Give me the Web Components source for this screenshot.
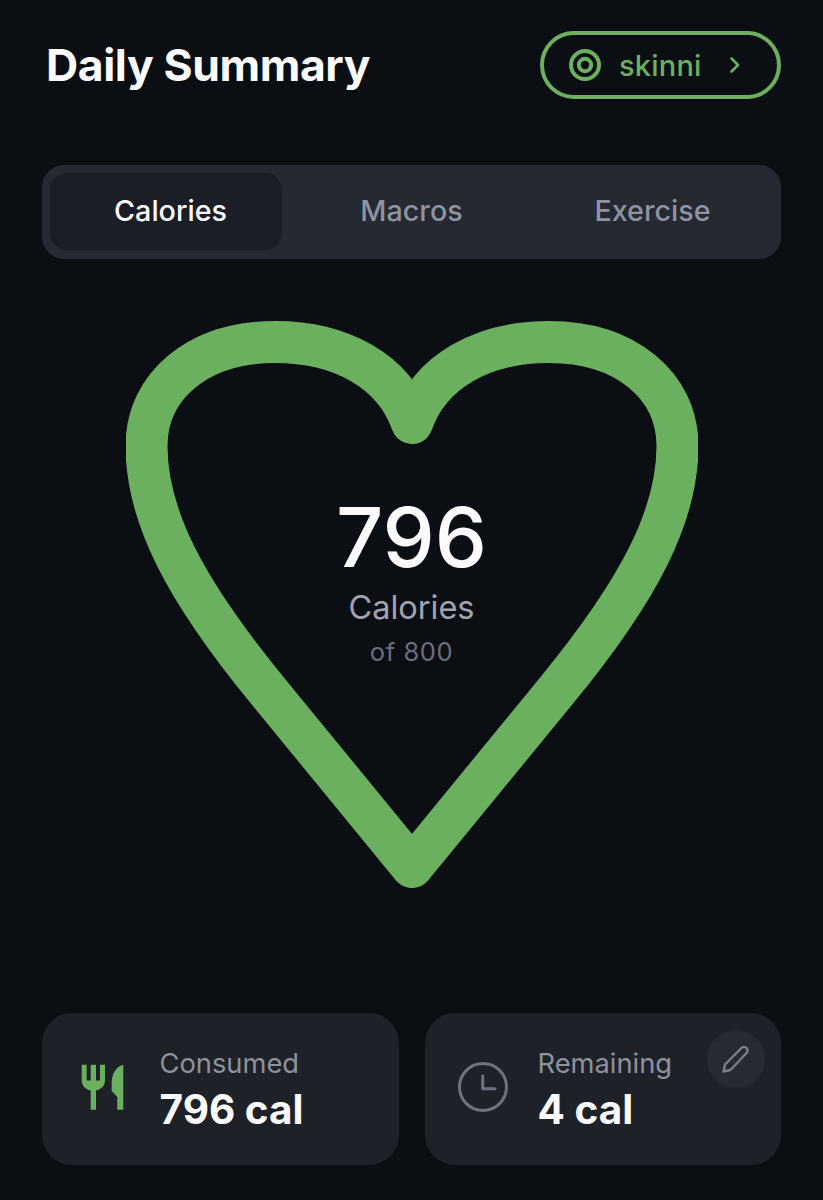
<!DOCTYPE html>
<html lang="en"><head><meta charset="utf-8"><title>Daily Summary</title>
<style>
html,body{margin:0;background:#0b0e13;}
body{width:823px;height:1200px;overflow:hidden;font-family:Inter,"Liberation Sans",sans-serif;color:#fff;}
daily-page{display:block}
</style></head><body>
<daily-page>
  <page-header slot="header"><span slot="title">Daily Summary</span><user-pill>skinni</user-pill></page-header>
  <seg-tabs></seg-tabs>
  <heart-gauge value="796" label="Calories" sub="of 800"></heart-gauge>
  <stat-card slot="card" kind="food" label="Consumed" value="796 cal"></stat-card>
  <stat-card slot="card" kind="clock" label="Remaining" value="4 cal" editable></stat-card>
</daily-page>
<script>
function def(name, css, html){
  customElements.define(name, class extends HTMLElement{
    constructor(){super();this.attachShadow({mode:'open'});}
    connectedCallback(){this.shadowRoot.innerHTML='<style>'+css+'</style>'+(typeof html==='function'?html(this):html);}
  });
}
def('daily-page',`
:host{display:block;box-sizing:border-box;width:823px;height:1200px;padding:31px 42px 0}
.cards{display:grid;grid-template-columns:357px 356px;column-gap:26px;margin-top:125px}
`,`<slot name="header"></slot><slot></slot><div class="cards"><slot name="card"></slot></div>`);

def('page-header',`
:host{display:flex;justify-content:space-between;align-items:center;height:68px;padding-left:4px}
.t{font:700 44.500px/1 Inter,"Liberation Sans",sans-serif;letter-spacing:-.4px;color:#fbfbfd;margin-top:1px}
`,`<div class="t"><slot name="title"></slot></div><slot></slot>`);

def('user-pill',`
:host{display:flex;align-items:center;box-sizing:border-box;width:241px;height:68px;border:4px solid #6cb05f;border-radius:34px;padding-left:25px;color:#6cb05f;font:500 29px/1 Inter,"Liberation Sans",sans-serif}
svg{display:block;flex:none}
.n{margin-left:18px;width:84px;letter-spacing:.2px}
.c{margin-left:26px}
`,`<svg width="32" height="32" viewBox="0 0 32 32" fill="none" stroke="#6cb05f" stroke-width="4"><circle cx="16" cy="16" r="14"/><circle cx="16" cy="16" r="6.200"/></svg>
<span class="n"><slot></slot></span>
<svg class="c" width="12" height="18" viewBox="0 0 12 18" fill="none" stroke="#6cb05f" stroke-width="2.600" stroke-linecap="round" stroke-linejoin="round"><path d="M2.500 2.500 9 9l-6.500 6.500"/></svg>`);

def('seg-tabs',`
:host{display:grid;grid-template-columns:repeat(3,1fr);position:relative;box-sizing:border-box;height:94px;margin-top:66px;padding:8px 8px 9px;background:#252932;border-radius:22px;font:500 28.700px/1 Inter,"Liberation Sans",sans-serif}
.ind{position:absolute;left:8px;top:8px;width:232px;height:77px;border-radius:17px;background:#1b1e26}
.tab{position:relative;display:flex;align-items:center;justify-content:center;color:#8f93a1}
.on{color:#fbfbfd}
`,`<div class="ind"></div><div class="tab on">Calories</div><div class="tab">Macros</div><div class="tab">Exercise</div>`);

def('heart-gauge',`
:host{display:grid;justify-items:center;margin-top:62px;height:567px}
svg,.txt{grid-area:1/1}
svg{display:block}
.txt{display:flex;flex-direction:column;align-items:center;padding-top:168px}
.v{font:550 83px/96px Inter,"Liberation Sans",sans-serif;color:#fbfbfd}
.l{font:400 32.500px/38px Inter,"Liberation Sans",sans-serif;color:#a0a3b1;margin-top:4px}
.s{font:400 25.500px/30px Inter,"Liberation Sans",sans-serif;color:#6b6e7c;margin-top:10px;letter-spacing:.6px}
`,h=>`<svg width="572" height="567" viewBox="0 0 572 567" fill="none" stroke="#6bb05f" stroke-width="42" stroke-linecap="round" stroke-linejoin="round"><path d="M286 102C268 50 215 21 149 21 72 21 20.500 65 20.500 125 20.500 195 59 269 141 369L286 546 431 369C513 269 551.500 195 551.500 125 551.500 65 500 21 423 21 357 21 304 50 286 102Z"/></svg>
<div class="txt"><div class="v">${h.getAttribute('value')}</div><div class="l">${h.getAttribute('label')}</div><div class="s">${h.getAttribute('sub')}</div></div>`);

const food=`<svg width="44" height="46" viewBox="0 0 44 46" fill="#6bb05f"><path d="M.7.7H5.700V16.500H9.700V.7H15V16.500H19V.7H24V16C24 22 20 25.500 15 26.500V45.700H9.700V26.500C4.700 25.500.7 22 .7 16Z"/><path d="M42.300.7V45.700H36.300V33L30.700 27V19C30.700 10 35 2.500 42.300.7Z"/></svg>`;
const clock=`<svg width="50" height="50" viewBox="0 0 50 50" fill="none" stroke="#6f727d" stroke-width="3" stroke-linecap="round" stroke-linejoin="round"><circle cx="25" cy="25" r="23.500"/><path d="M24.700 14v12.700H37"/></svg>`;
def('stat-card',`
:host{display:flex;align-items:center;position:relative;box-sizing:border-box;height:152px;background:#1e2228;border-radius:30px;font-family:Inter,"Liberation Sans",sans-serif}
.ico{flex:none;display:block}
.food{margin:0 34.500px 0 39px}
.clock{margin:0 29.500px 0 33px}
.txt{margin-top:3px}
.l{font:400 27.300px/32px Inter,"Liberation Sans",sans-serif;color:#8e919e}
.v{font:700 40.500px/48px Inter,"Liberation Sans",sans-serif;color:#fbfbfd;margin-top:6px}
.ed{position:absolute;right:16px;top:17px;width:58px;height:58px;border-radius:50%;background:#272a32;display:flex;align-items:center;justify-content:center}
`,h=>{const k=h.getAttribute('kind');return `<div class="ico ${k}">${k==='food'?food:clock}</div><div class="txt"><div class="l">${h.getAttribute('label')}</div><div class="v">${h.getAttribute('value')}</div></div>${h.hasAttribute('editable')?`<div class="ed"><svg width="30" height="30" viewBox="0 0 30 30" fill="none" stroke="#7b7e89" stroke-width="2.400" stroke-linecap="round" stroke-linejoin="round"><path d="M2.500 27.500l1.500-7L20.500 4a3.400 3.400 0 0 1 5 5L9.500 26z"/></svg></div>`:''}`});
</script>
</body></html>
